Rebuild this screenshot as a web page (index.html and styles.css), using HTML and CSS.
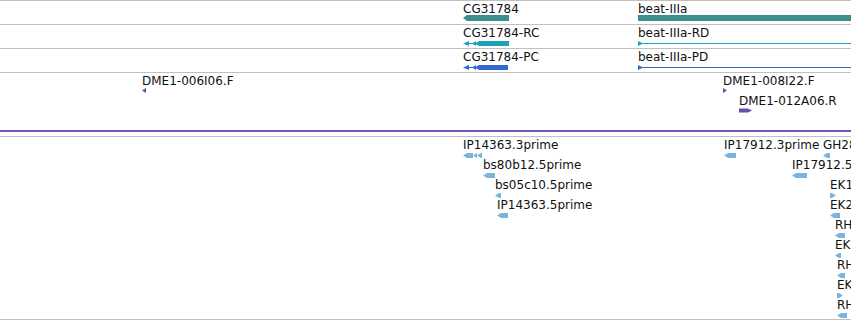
FILE: index.html
```html
<!DOCTYPE html>
<html lang="en">
<head>
    <meta charset="UTF-8">
    <meta name="viewport" content="width=device-width, initial-scale=1.0">
    <title>Genome view</title>
    <link rel="stylesheet" href="styles.css">
</head>
<body>

    <div class="view">

        <!-- Genes -->
        <div class="track row">
            <div class="feat" style="left:463px;top:1px">
                <span class="lbl">CG31784</span>
                <svg class="glyph gene" width="46" height="10"><polygon points="0,4 4,1 46,1 46,7 4,7"/></svg>
            </div>
            <div class="feat" style="left:638px;top:1px">
                <span class="lbl">beat-IIIa</span>
                <svg class="glyph gene" width="230" height="10"><rect x="0" y="1" width="230" height="6"/></svg>
            </div>
        </div>

        <!-- mRNA -->
        <div class="track row">
            <div class="feat" style="left:463px;top:1px">
                <span class="lbl">CG31784-RC</span>
                <svg class="glyph rna" width="46" height="10">
                    <rect x="2" y="5" width="14" height="1"/>
                    <polygon points="0,5.5 6,3 6,8"/>
                    <polygon points="9,5.5 13,3 13,8"/>
                    <polygon points="12,5.5 16,3 16,8"/>
                    <rect x="16" y="3" width="30" height="5"/>
                </svg>
            </div>
            <div class="feat" style="left:638px;top:1px">
                <span class="lbl">beat-IIIa-RD</span>
                <svg class="glyph rna" width="230" height="10">
                    <polygon points="0,3 5,5.5 0,8"/>
                    <rect x="0" y="5" width="230" height="1"/>
                </svg>
            </div>
        </div>

        <!-- Protein -->
        <div class="track row">
            <div class="feat" style="left:463px;top:1px">
                <span class="lbl">CG31784-PC</span>
                <svg class="glyph prot" width="45" height="10">
                    <rect x="2" y="5" width="14" height="1"/>
                    <polygon points="0,5.5 6,3 6,8"/>
                    <polygon points="9,5.5 13,3 13,8"/>
                    <polygon points="12,5.5 16,3 16,8"/>
                    <rect x="16" y="3" width="29" height="5"/>
                </svg>
            </div>
            <div class="feat" style="left:638px;top:1px">
                <span class="lbl">beat-IIIa-PD</span>
                <svg class="glyph prot" width="230" height="10">
                    <polygon points="0,3 5,5.5 0,8"/>
                    <rect x="0" y="5" width="230" height="1"/>
                </svg>
            </div>
        </div>

        <!-- BAC ends -->
        <div class="track bac">
            <div class="feat" style="left:142px;top:1px">
                <span class="lbl">DME1-006I06.F</span>
                <svg class="glyph clone" width="5" height="10"><polygon points="4,2 0,4.5 4,7"/></svg>
            </div>
            <div class="feat" style="left:723px;top:1px">
                <span class="lbl">DME1-008I22.F</span>
                <svg class="glyph clone" width="5" height="10"><polygon points="0,2 4,4.5 0,7"/></svg>
            </div>
            <div class="feat" style="left:739px;top:21px">
                <span class="lbl">DME1-012A06.R</span>
                <svg class="glyph clone" width="14" height="10"><polygon points="0,2.5 9,2.5 13,4.5 9,6.5 0,6.5"/></svg>
            </div>
        </div>

        <!-- ESTs -->
        <div class="track est">
            <div class="feat" style="left:463px;top:1px">
                <span class="lbl">IP14363.3prime</span>
                <svg class="glyph seq" width="19" height="10">
                    <polygon points="0,5.5 4,3 10,3 10,8 4,8"/>
                    <polygon points="10,5.5 14,3 14,8"/>
                    <polygon points="14,5.5 18,3 19,3 19,8 18,8"/>
                </svg>
            </div>
            <div class="feat" style="left:483px;top:21px">
                <span class="lbl">bs80b12.5prime</span>
                <svg class="glyph seq" width="12" height="10"><polygon points="0,5.5 4,3 12,3 12,8 4,8"/></svg>
            </div>
            <div class="feat" style="left:495px;top:41px">
                <span class="lbl">bs05c10.5prime</span>
                <svg class="glyph seq" width="6" height="10"><polygon points="0,5.5 4,3 6,3 6,8 4,8"/></svg>
            </div>
            <div class="feat" style="left:497px;top:61px">
                <span class="lbl">IP14363.5prime</span>
                <svg class="glyph seq" width="11" height="10"><polygon points="0,5.5 4,3 11,3 11,8 4,8"/></svg>
            </div>

            <div class="feat" style="left:724px;top:1px">
                <span class="lbl">IP17912.3prime</span>
                <svg class="glyph seq" width="12" height="10"><polygon points="0,5.5 4,3 12,3 12,8 4,8"/></svg>
            </div>
            <div class="feat" style="left:823px;top:1px">
                <span class="lbl">GH28157.5prime</span>
                <svg class="glyph seq" width="7" height="10"><polygon points="0,5.5 4,3 7,3 7,8 4,8"/></svg>
            </div>
            <div class="feat" style="left:792px;top:21px">
                <span class="lbl">IP17912.5prime</span>
                <svg class="glyph seq" width="15" height="10"><polygon points="0,5.5 4,3 15,3 15,8 4,8"/></svg>
            </div>
            <div class="feat" style="left:830px;top:41px">
                <span class="lbl">EK115470.3prime</span>
                <svg class="glyph seq" width="6" height="10"><polygon points="0,3 2,3 6,5.5 2,8 0,8"/></svg>
            </div>
            <div class="feat" style="left:830px;top:61px">
                <span class="lbl">EK214862.5prime</span>
                <svg class="glyph seq" width="10" height="10"><polygon points="0,5.5 4,3 10,3 10,8 4,8"/></svg>
            </div>
            <div class="feat" style="left:835px;top:81px">
                <span class="lbl">RH44072.5prime</span>
                <svg class="glyph seq" width="10" height="10"><polygon points="0,5.5 4,3 10,3 10,8 4,8"/></svg>
            </div>
            <div class="feat" style="left:835px;top:101px">
                <span class="lbl">EK083319.5prime</span>
                <svg class="glyph seq" width="6" height="10"><polygon points="0,5.5 4,3 6,3 6,8 4,8"/></svg>
            </div>
            <div class="feat" style="left:837px;top:121px">
                <span class="lbl">RH59218.5prime</span>
                <svg class="glyph seq" width="8" height="10"><polygon points="0,5.5 4,3 8,3 8,8 4,8"/></svg>
            </div>
            <div class="feat" style="left:837px;top:141px">
                <span class="lbl">EK190223.3prime</span>
                <svg class="glyph seq" width="6" height="10"><polygon points="0,3 2,3 6,5.5 2,8 0,8"/></svg>
            </div>
            <div class="feat" style="left:837px;top:161px">
                <span class="lbl">RH31077.5prime</span>
                <svg class="glyph seq" width="10" height="10"><polygon points="0,5.5 4,3 10,3 10,8 4,8"/></svg>
            </div>
        </div>

    </div>

</body>
</html>
```

FILE: styles.css
```css
/* Umumiy sahifa */
body {
    margin: 0;
    padding: 0;
    background-color: white;
    font-family: "DejaVu Sans", sans-serif;
    font-size: 12px;
    color: #111;
    overflow: hidden;
}

/* Ko'rinish oynasi */
.view {
    width: 851px;
    height: 320px;
    overflow: hidden;
}

/* Treklar */
.track {
    position: relative;
    border-top: 1px solid #c0c0c0;
}

.row {
    height: 23px;
}

.bac {
    height: 57px;
    border-bottom: 2px solid #7454b4;
    margin-bottom: 4px;
}

.est {
    height: 182px;
    border-bottom: 1px solid #c0c0c0;
}

/* Xususiyatlar */
.feat {
    position: absolute;
}

.lbl {
    display: block;
    height: 12px;
    line-height: 14px;
    white-space: nowrap;
}

.glyph {
    display: block;
    margin-top: 0;
}

.gene { fill: #3c8f8f; }
.rna { fill: #1aa2ba; }
.prot { fill: #3468cc; }
.clone { fill: #6a4fa8; }
.seq { fill: #7cb4e0; }
```
